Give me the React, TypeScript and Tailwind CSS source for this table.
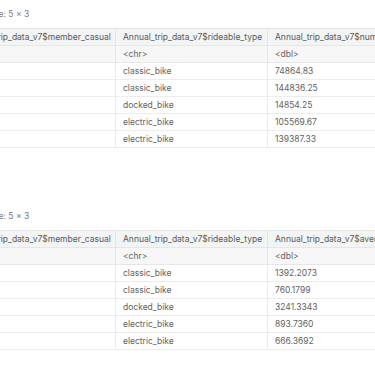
const tables = [
  {
    third: "Annual_trip_data_v7$number_of_rides",
    rows: [
      ["classic_bike", "74864.83"],
      ["classic_bike", "144836.25"],
      ["docked_bike", "14854.25"],
      ["electric_bike", "105569.67"],
      ["electric_bike", "139387.33"],
    ],
  },
  {
    third: "Annual_trip_data_v7$average_ride_length",
    rows: [
      ["classic_bike", "1392.2073"],
      ["classic_bike", "760.1799"],
      ["docked_bike", "3241.3343"],
      ["electric_bike", "893.7360"],
      ["electric_bike", "666.3692"],
    ],
  },
]

function Tibble({ third, rows }: { third: string; rows: string[][] }) {
  return (
    <div>
      <div className="h-[14px] leading-[14px] pl-[18px] text-[8.5px] text-[#7d7d7d]">A tibble: 5 × 3</div>
      <table className="mt-[7px] w-[527px] table-fixed border-collapse whitespace-nowrap">
        <colgroup>
          <col className="w-[160px]" />
          <col className="w-[152px]" />
          <col className="w-[215px]" />
        </colgroup>
        <thead>
          <tr className="bg-[#f3f4f4] text-[#555a5e]">
            <th className="h-[17px] overflow-hidden border border-[#e6e6e6] px-[7px] text-left font-normal">
              Annual_trip_data_v7$member_casual
            </th>
            <th className="h-[17px] overflow-hidden border border-[#e6e6e6] px-[7px] text-left font-normal">
              Annual_trip_data_v7$rideable_type
            </th>
            <th className="h-[17px] overflow-hidden border border-[#e6e6e6] px-[7px] text-left font-normal">{third}</th>
          </tr>
          <tr className="bg-[#f7f7f7] text-[#626262]">
            <th className="h-[17px] border border-[#e6e6e6] px-[7px] text-left font-normal">&lt;chr&gt;</th>
            <th className="h-[17px] border border-[#e6e6e6] px-[7px] text-left font-normal">&lt;chr&gt;</th>
            <th className="h-[17px] border border-[#e6e6e6] px-[7px] text-left font-normal">&lt;dbl&gt;</th>
          </tr>
        </thead>
        <tbody className="text-[#626262]">
          {rows.map((r, i) => (
            <tr key={i}>
              <td className="h-[17px] border border-[#ececec] px-[7px]"></td>
              <td className="h-[17px] border border-[#ececec] px-[7px]">{r[0]}</td>
              <td className="h-[17px] border border-[#ececec] px-[7px]">{r[1]}</td>
            </tr>
          ))}
        </tbody>
      </table>
    </div>
  )
}

export default function App() {
  return (
    <div className="h-[366px] w-[375px] overflow-hidden bg-white font-['Inter',sans-serif] text-[8.5px]">
      <div className="-ml-[45px] pt-[7px] flex flex-col gap-[61px]">
        {tables.map((t, i) => (
          <Tibble key={i} third={t.third} rows={t.rows} />
        ))}
      </div>
    </div>
  )
}
